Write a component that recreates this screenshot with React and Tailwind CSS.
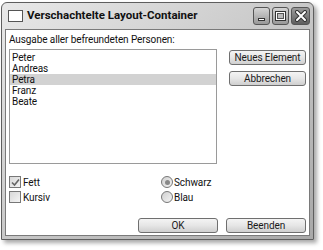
import React from 'react';

const font = { fontFamily: 'Roboto, "Liberation Sans", Arial, sans-serif' };

function Btn({ children, className = '' }) {
  return (
    <div
      className={`flex items-center justify-center rounded-[3px] border border-[#6f6f6f] bg-gradient-to-b from-[#f4f4f4] via-[#e6e6e6] to-[#cfcfcf] text-[10px] tracking-[-0.1px] text-[#1a1a1a] ${className}`}
    >
      {children}
    </div>
  );
}

function CaptionBtn({ children, dark }) {
  return (
    <div
      className={`flex h-[18px] items-center justify-center rounded-[3px] border border-[#555] ${
        dark
          ? 'w-[19px] bg-gradient-to-b from-[#9c9c9c] to-[#5e5e5e]'
          : 'w-[17px] bg-gradient-to-b from-[#d4d4d4] to-[#989898]'
      }`}
    >
      {children}
    </div>
  );
}

export default function App() {
  const people = ['Peter', 'Andreas', 'Petra', 'Franz', 'Beate'];

  return (
    <div className="h-[250px] w-[323px] bg-white" style={font}>
      <div className="ml-[1px] pt-[2px]">
        <div className="flex h-[238px] w-[313px] flex-col rounded-t-[6px] border border-[#5e5e5e] bg-gradient-to-br from-[#e8e8e8] via-[#c8c8c8] to-[#a8a8a8] shadow-[3px_3px_4px_rgba(0,0,0,0.35)]">
          {/* title bar */}
          <div className="flex h-[26px] items-center pl-[6px] pr-[3px]">
            <div className="h-[12px] w-[15px] border border-[#555] bg-white" />
            <span className="ml-[4px] text-[11.5px] font-bold text-[#111]">
              Verschachtelte Layout-Container
            </span>
            <div className="ml-auto flex gap-[2px]">
              <CaptionBtn>
                <div className="mt-[7px] h-[3px] w-[7px] border border-[#333] bg-white" />
              </CaptionBtn>
              <CaptionBtn>
                <div className="h-[10px] w-[11px] border border-[#333] bg-white p-[1px]">
                  <div className="h-full w-full border border-[#555] bg-[#bbb]" />
                </div>
              </CaptionBtn>
              <CaptionBtn dark>
                <svg width="12" height="12" viewBox="0 0 12 12">
                  <path d="M2 2 L10 10 M10 2 L2 10" stroke="#333" strokeWidth="4" strokeLinecap="round" />
                  <path d="M2 2 L10 10 M10 2 L2 10" stroke="#fff" strokeWidth="2" strokeLinecap="round" />
                </svg>
              </CaptionBtn>
            </div>
          </div>
          {/* client area */}
          <div className="mx-[3px] mb-[3px] flex flex-1 flex-col border border-[#7a7a7a] bg-white px-[3px] text-[10px] tracking-[-0.1px] text-[#111]">
            <div className="mt-[4px] h-[12px] leading-[12px]">Ausgabe aller befreundeten Personen:</div>
            <div className="mt-[3px] flex">
              <div className="h-[115px] w-[208px] border border-[#9a9a9a] py-[2px]">
                {people.map((p) => (
                  <div
                    key={p}
                    className={`h-[11px] pl-[2px] leading-[11px] ${p === 'Petra' ? 'bg-[#d2d2d2]' : ''}`}
                  >
                    {p}
                  </div>
                ))}
              </div>
              <div className="ml-[12px] mt-[1px] flex flex-col gap-[6px]">
                <Btn className="h-[15px] w-[77px]">Neues Element</Btn>
                <Btn className="h-[15px] w-[77px]">Abbrechen</Btn>
              </div>
            </div>
            <div className="mt-[12px] flex">
              <div className="flex w-[152px] flex-col gap-[3px]">
                <div className="flex h-[12px] items-center">
                  <div className="flex h-[12px] w-[12px] items-center justify-center border border-[#777] bg-gradient-to-br from-[#d8d8d8] to-[#f4f4f4]">
                    <svg width="9" height="9" viewBox="0 0 9 9">
                      <path d="M1 4.5 L3.5 7 L8 1.5" stroke="#666" strokeWidth="1.6" fill="none" />
                    </svg>
                  </div>
                  <span className="ml-[2px]">Fett</span>
                </div>
                <div className="flex h-[12px] items-center">
                  <div className="h-[12px] w-[12px] border border-[#777] bg-gradient-to-br from-[#d8d8d8] to-[#f4f4f4]" />
                  <span className="ml-[2px]">Kursiv</span>
                </div>
              </div>
              <div className="flex flex-col gap-[3px]">
                <div className="flex h-[12px] items-center">
                  <div className="flex h-[12px] w-[12px] items-center justify-center rounded-full border border-[#777] bg-gradient-to-br from-[#d0d0d0] to-[#f4f4f4]">
                    <div className="h-[5px] w-[5px] rounded-full bg-[#888]" />
                  </div>
                  <span className="ml-[1px]">Schwarz</span>
                </div>
                <div className="flex h-[12px] items-center">
                  <div className="h-[12px] w-[12px] rounded-full border border-[#777] bg-gradient-to-br from-[#d0d0d0] to-[#f4f4f4]" />
                  <span className="ml-[1px]">Blau</span>
                </div>
              </div>
            </div>
            <div className="mt-auto mb-[2px] flex justify-end gap-[8px] pr-[0px]">
              <Btn className="h-[15px] w-[80px]">OK</Btn>
              <Btn className="h-[15px] w-[80px]">Beenden</Btn>
            </div>
          </div>
        </div>
      </div>
    </div>
  );
}
